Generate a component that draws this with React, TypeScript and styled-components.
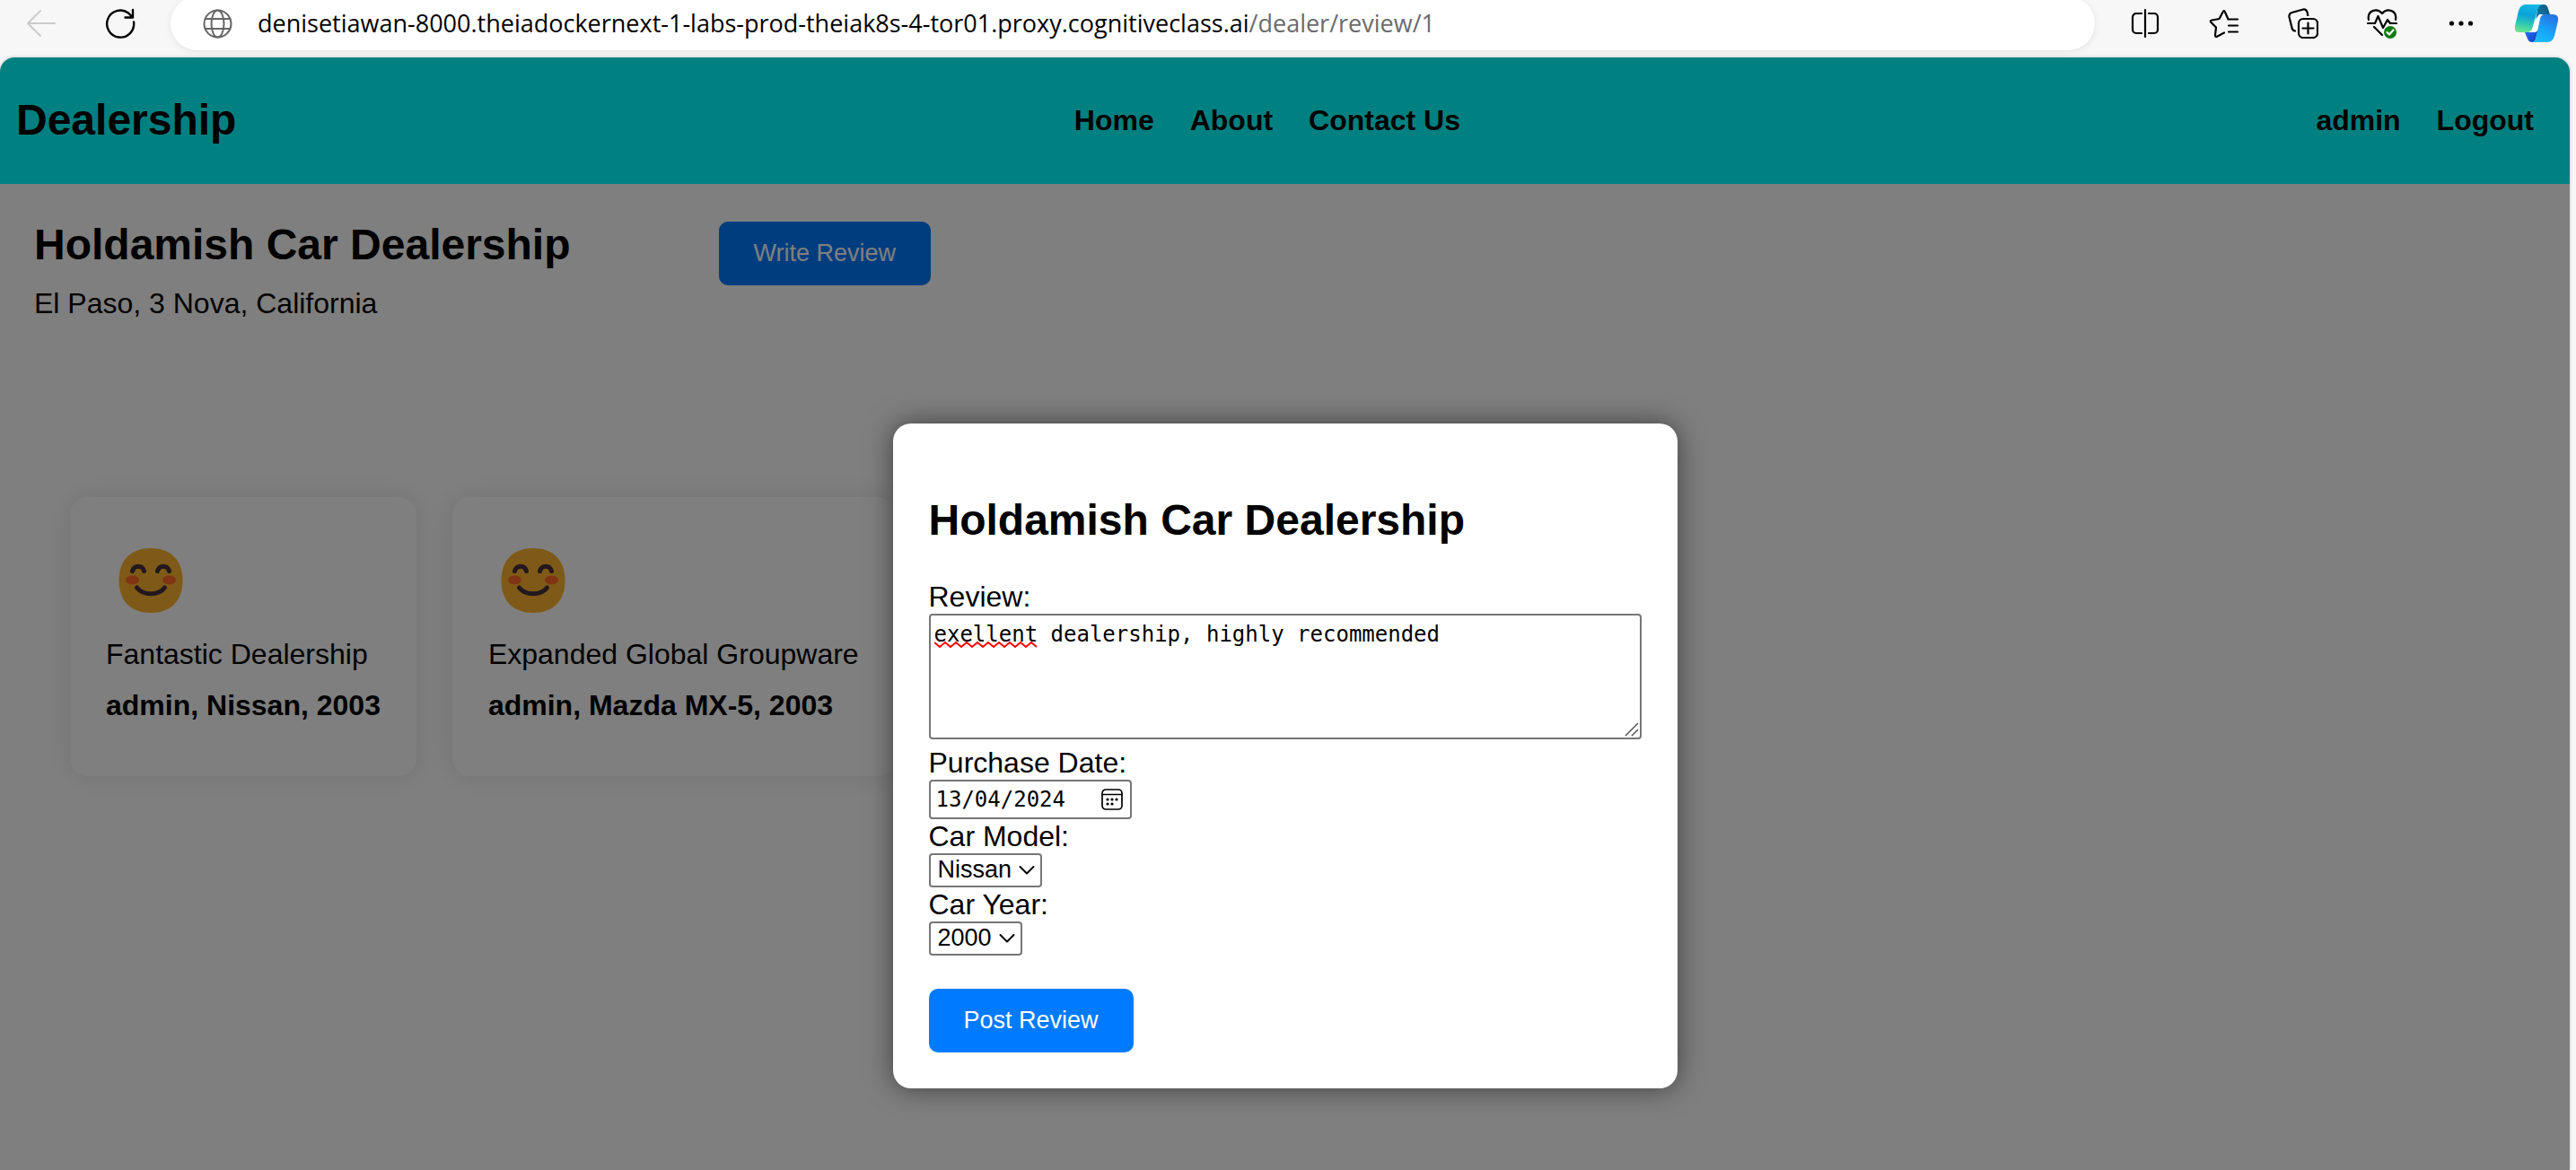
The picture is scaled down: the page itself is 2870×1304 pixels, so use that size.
import React, { useState } from "react";
import styled, { createGlobalStyle } from "styled-components";

const sans = `"Liberation Sans", Arial, sans-serif`;
const mono = `"DejaVu Sans Mono", Consolas, monospace`;

const GlobalStyle = createGlobalStyle`
  *, *::before, *::after { box-sizing: border-box; }
  html, body, #root { height: 100%; }
  body {
    margin: 0;
    background: #f7f7f7;
    color: #000;
    font: 32px/38px ${sans};
    overflow: hidden;
  }
  h1, p { margin: 0; }
  a { color: inherit; text-decoration: none; }
`;

const Browser = styled.div`
  display: flex;
  flex-direction: column;
  height: 100%;
`;

const Toolbar = styled.div`
  flex: none;
  display: flex;
  align-items: flex-start;
  height: 64px;
  padding: 0 4px 0 2px;
`;

const ToolButton = styled.button<{ $faded?: boolean; $narrow?: boolean }>`
  display: flex;
  align-items: center;
  justify-content: center;
  width: ${(p) => (p.$narrow ? 80 : 88)}px;
  height: 52px;
  padding: 0;
  border: 0;
  background: none;
  color: ${(p) => (p.$faded ? "#cccccc" : "#000000")};
`;

const AddressBar = styled.div`
  flex: 1;
  display: flex;
  align-items: center;
  gap: 28px;
  height: 60px;
  margin: -4px 12px 0;
  padding: 0 36px;
  border-radius: 30px;
  background: #fff;
  color: #666;
  box-shadow: 0 2px 8px rgba(0, 0, 0, 0.08);
`;

const Address = styled.a`
  color: #6b6b6b;
  font: 27px/36px "Open Sans", "Noto Sans", sans-serif;
  white-space: nowrap;
`;

const Host = styled.span`
  color: #000;
`;

const Page = styled.div`
  flex: 1;
  display: flex;
  flex-direction: column;
  margin-right: 7px;
  border-radius: 16px 16px 0 0;
  background: #fff;
  overflow: hidden;
  box-shadow: 0 0 4px rgba(0, 0, 0, 0.2);
`;

const Header = styled.header`
  flex: none;
  display: flex;
  align-items: center;
  justify-content: space-between;
  height: 141px;
  padding: 0 20px 2px 18px;
  background: #008080;
  font-weight: bold;
`;

const Brand = styled.a`
  font-size: 48px;
  line-height: 52px;
`;

const Nav = styled.nav`
  display: flex;
  gap: 40px;
  padding: 0 20px;
`;

const Main = styled.main`
  position: relative;
  flex: 1;
  padding: 42px 38px;
`;

const Intro = styled.section`
  display: flex;
  align-items: flex-start;
  gap: 165px;
`;

const IntroText = styled.div`
  display: flex;
  flex-direction: column;
  gap: 20px;
`;

const Title = styled.h1`
  font-size: 48px;
  line-height: 52px;
`;

const PrimaryButton = styled.button`
  height: 71px;
  padding: 0 39px 2px;
  border: 0;
  border-radius: 10px;
  background: #007bff;
  color: #fff;
  font: 27px/32px ${sans};
  white-space: nowrap;
`;

const Reviews = styled.section`
  display: flex;
  gap: 40px;
  padding: 197px 40px 0;
`;

const Card = styled.article`
  display: flex;
  flex-direction: column;
  padding: 40px 40px 60px;
  border-radius: 20px;
  background: #fff;
  box-shadow: 0 0 30px rgba(0, 0, 0, 0.1);
  white-space: nowrap;

  svg { display: block; margin-bottom: 10px; }
`;

const Author = styled.p`
  margin-top: 19px;
  font-weight: bold;
`;

const Overlay = styled.div`
  position: absolute;
  inset: 0;
  display: flex;
  align-items: flex-start;
  justify-content: center;
  padding-top: 267px;
  background: rgba(0, 0, 0, 0.5);
`;

const Dialog = styled.form`
  display: flex;
  flex-direction: column;
  align-items: flex-start;
  width: 874px;
  padding: 82px 40px 40px;
  border-radius: 20px;
  background: #fff;
  box-shadow: 0 0 30px rgba(0, 0, 0, 0.5);

  ${Title} { margin-bottom: 40px; }
  ${PrimaryButton} { margin-top: 37px; }
`;

const fieldBorder = `
  margin: 0;
  border: 2px solid #767676;
  border-radius: 4px;
  background: #fff;
  color: #000;
`;

const TextBox = styled.div`
  position: relative;
  align-self: stretch;
  margin-bottom: 7px;
`;

const TextArea = styled.textarea`
  ${fieldBorder}
  display: block;
  width: 100%;
  height: 140px;
  padding: 4px;
  font: 24px/34px ${mono};
  resize: none;
`;

const Squiggle = styled.svg`
  position: absolute;
  left: 6px;
  top: 31px;
`;

const Grip = styled.svg`
  position: absolute;
  right: 3px;
  bottom: 3px;
`;

const DateBox = styled.div`
  ${fieldBorder}
  display: flex;
  align-items: center;
  gap: 30px;
  height: 44px;
  padding: 0 8px 0 6px;
`;

const DateInput = styled.input`
  width: 154px;
  padding: 0;
  border: 0;
  background: none;
  font: 24px/32px ${mono};
`;

const IconButton = styled.button`
  display: flex;
  padding: 0;
  border: 0;
  background: none;
  color: #000;
`;

const SelectBox = styled.div`
  position: relative;
  display: flex;
  align-items: center;

  svg { position: absolute; right: 8px; pointer-events: none; }
`;

const Select = styled.select`
  ${fieldBorder}
  appearance: none;
  height: 38px;
  padding: 0 31px 2px 8px;
  font: 27px/32px ${sans};
`;

const line = { fill: "none", stroke: "currentColor", strokeWidth: 2, strokeLinecap: "round", strokeLinejoin: "round" } as const;

const BackIcon = () => (
  <svg width="32" height="30" viewBox="0 0 32 30" {...line}>
    <path d="M31 15H1M15 1 1 15l14 14" />
  </svg>
);

const ReloadIcon = () => (
  <svg width="34" height="34" viewBox="0 0 34 34" {...line} strokeWidth={2.4}>
    <path d="M32 15.500A15 15 0 1 1 26 5.500L30.500 10M31 2v8.500h-8.500" />
  </svg>
);

const GlobeIcon = () => (
  <svg width="33" height="33" viewBox="0 0 33 33" {...line}>
    <circle cx="16.500" cy="16.500" r="15" />
    <ellipse cx="16.500" cy="16.500" rx="7" ry="15" />
    <path d="M3 11h27M3 22h27" />
  </svg>
);

const SplitIcon = () => (
  <svg width="32" height="34" viewBox="0 0 32 34" {...line} strokeWidth={2.2}>
    <path d="M12 6H6a4 4 0 0 0-4 4v14a4 4 0 0 0 4 4h6M20 6h6a4 4 0 0 1 4 4v14a4 4 0 0 1-4 4h-6M16 2v30" />
  </svg>
);

const FavoritesIcon = () => (
  <svg width="34" height="34" viewBox="0 0 34 34" {...line} strokeWidth={2.2}>
    <path d="M21.500 12.500 18 4.500q-1-3-2.500 0L11.500 12 3.500 13.500Q.500 14 2.500 16L8 21.500 7 30q0 3 2.500 1.500L17 27.500M21.500 12.500H32M22 19.500h10M22 26.500h10" />
  </svg>
);

const CollectionsIcon = () => (
  <svg width="34" height="34" viewBox="0 0 34 34" {...line} strokeWidth={2.2}>
    <rect x="12" y="12" width="21" height="21" rx="5" />
    <path d="M22.500 16.500v12M16.500 22.500h12M8 25.500q-3-.500-3.500-3.500L1.500 10q-.500-4 3-5L17 1.500q3.500-.500 4.500 3l.800 3.500" />
  </svg>
);

const HealthIcon = () => (
  <svg width="34" height="34" viewBox="0 0 34 34" {...line} strokeWidth={2.2}>
    <path d="M2 13C0 3 11-1 17 6c6-7 17-3 15 7M1 17h8l3.500-8 5.500 13 5-9 3 4h7M8 21l9 9" />
    <circle cx="26" cy="27" r="7" fill="#107c10" stroke="none" />
    <path d="m22.500 27 2.500 2.500 4.500-5" stroke="#fff" />
  </svg>
);

const MoreIcon = () => (
  <svg width="28" height="8" viewBox="0 0 28 8" fill="currentColor">
    <circle cx="3.500" cy="4" r="2.600" />
    <circle cx="14" cy="4" r="2.600" />
    <circle cx="24.500" cy="4" r="2.600" />
  </svg>
);

const CopilotIcon = () => (
  <svg width="48" height="42" viewBox="0 0 48 42">
    <defs>
      <linearGradient id="petalLeft" x1="0.600" y1="0" x2="0.400" y2="1">
        <stop offset="0" stopColor="#14b8e4" />
        <stop offset="0.400" stopColor="#0ba2da" />
        <stop offset="0.700" stopColor="#2cc5b4" />
        <stop offset="1" stopColor="#66e490" />
      </linearGradient>
      <linearGradient id="petalRight" x1="0.800" y1="0" x2="0.300" y2="1">
        <stop offset="0" stopColor="#2b70dc" />
        <stop offset="0.600" stopColor="#16a6fb" />
        <stop offset="1" stopColor="#1fbdf6" />
      </linearGradient>
      <linearGradient id="foldTop" x1="0" y1="1" x2="1" y2="0">
        <stop offset="0" stopColor="#1088b8" />
        <stop offset="1" stopColor="#0b5078" />
      </linearGradient>
      <linearGradient id="foldBottom" x1="0" y1="0" x2="1" y2="1">
        <stop offset="0" stopColor="#2278f4" />
        <stop offset="1" stopColor="#1438c8" />
      </linearGradient>
    </defs>
    <path d="M26 0h6q3.500 0 4.500 3.500L39 11h-8q-4 0-5 3l-3 3z" fill="url(#foldTop)" />
    <path d="M11 31h10l5-3-4 14h-3q-4 0-5.500-5z" fill="url(#foldBottom)" />
    <path d="M31 11h-4l-5 7-5 13h4q4 0 5-4z" fill="#fff" />
    <path d="M12 0h20q-5 0-7 6l-5.500 20q-1.500 5-5.500 5H5q-6 0-5-7L4 7q2-7 8-7z" fill="url(#petalLeft)" />
    <path d="M33 11h9q7 0 6 7l-4 17q-2 7-8 7H18q4 0 5.500-5L28 16q1-5 5-5z" fill="url(#petalRight)" />
  </svg>
);

const SmileIcon = () => (
  <svg width="100" height="106" viewBox="0 0 100 106" fill="none" stroke="#45303d" strokeWidth="5" strokeLinecap="round">
    <path
      d="M50 17c22 0 35.500 13 35.500 36S72 89 50 89 14.500 76 14.500 53 28 17 50 17z"
      fill="#ffb32e"
      stroke="none"
    />
    <path d="M29.500 42.500c2-7 11-7 13 0M57.500 42.500c2-7 11-7 13 0M34.500 61c7 9 24 9 31 0" />
    <ellipse cx="29.500" cy="52.500" rx="7.500" ry="5" fill="#ff6a26" stroke="none" />
    <ellipse cx="70.500" cy="52.500" rx="7.500" ry="5" fill="#ff6a26" stroke="none" />
  </svg>
);

const CalendarIcon = () => (
  <svg width="24" height="24" viewBox="0 0 24 24" {...line} strokeWidth={1.7}>
    <rect x="1" y="1" width="22" height="22" rx="4" />
    <path d="M1 6.500h22" />
    <g fill="currentColor" stroke="none">
      <circle cx="7" cy="12" r="1.600" />
      <circle cx="12" cy="12" r="1.600" />
      <circle cx="17" cy="12" r="1.600" />
      <circle cx="7" cy="17" r="1.600" />
      <circle cx="12" cy="17" r="1.600" />
    </g>
  </svg>
);

const ChevronIcon = () => (
  <svg width="18" height="12" viewBox="0 0 18 12" {...line}>
    <path d="m1.500 2 7.500 7.500L16.500 2" />
  </svg>
);

const reviews = [
  { text: "Fantastic Dealership", author: "admin, Nissan, 2003" },
  { text: "Expanded Global Groupware", author: "admin, Mazda MX-5, 2003" },
];

const wave = "M0 1" + Array.from({ length: 19 }, (_, i) => `L${(i + 1) * 6} ${i % 2 ? 1 : 6}`).join("");

function Picker({ id, label, options }: { id: string; label: string; options: string[] }) {
  return (
    <>
      <label htmlFor={id}>{label}</label>
      <SelectBox>
        <Select id={id}>
          {options.map((o) => (
            <option key={o}>{o}</option>
          ))}
        </Select>
        <ChevronIcon />
      </SelectBox>
    </>
  );
}

export default function App() {
  const [review, setReview] = useState("exellent dealership, highly recommended");
  const [date, setDate] = useState("13/04/2024");

  return (
    <Browser>
      <GlobalStyle />
      <Toolbar>
        <ToolButton $faded aria-label="Back"><BackIcon /></ToolButton>
        <ToolButton aria-label="Refresh"><ReloadIcon /></ToolButton>
        <AddressBar>
          <GlobeIcon />
          <Address href="#">
            <Host>denisetiawan-8000.theiadockernext-1-labs-prod-theiak8s-4-tor01.proxy.cognitiveclass.ai</Host>
            /dealer/review/1
          </Address>
        </AddressBar>
        <ToolButton aria-label="Split screen"><SplitIcon /></ToolButton>
        <ToolButton aria-label="Favorites"><FavoritesIcon /></ToolButton>
        <ToolButton aria-label="Collections"><CollectionsIcon /></ToolButton>
        <ToolButton aria-label="Browser essentials"><HealthIcon /></ToolButton>
        <ToolButton aria-label="Settings and more"><MoreIcon /></ToolButton>
        <ToolButton $narrow aria-label="Copilot"><CopilotIcon /></ToolButton>
      </Toolbar>

      <Page>
        <Header>
          <Brand href="#">Dealership</Brand>
          <Nav>
            <a href="#">Home</a>
            <a href="#">About</a>
            <a href="#">Contact Us</a>
          </Nav>
          <Nav>
            <a href="#">admin</a>
            <a href="#">Logout</a>
          </Nav>
        </Header>

        <Main>
          <Intro>
            <IntroText>
              <Title>Holdamish Car Dealership</Title>
              <p>El Paso, 3 Nova, California</p>
            </IntroText>
            <PrimaryButton>Write Review</PrimaryButton>
          </Intro>
          <Reviews>
            {reviews.map((r) => (
              <Card key={r.text}>
                <SmileIcon />
                <p>{r.text}</p>
                <Author>{r.author}</Author>
              </Card>
            ))}
          </Reviews>

          <Overlay>
            <Dialog onSubmit={(e) => e.preventDefault()}>
              <Title>Holdamish Car Dealership</Title>
              <label htmlFor="review">Review:</label>
              <TextBox>
                <TextArea id="review" spellCheck={false} value={review} onChange={(e) => setReview(e.target.value)} />
                <Squiggle width="116" height="8" viewBox="0 0 116 8" fill="none" stroke="#ff0000" strokeWidth="2">
                  <path d={wave} />
                </Squiggle>
                <Grip width="16" height="16" viewBox="0 0 16 16" fill="none" stroke="#555" strokeWidth="1.500">
                  <path d="M1 15 15 1M8 15l7-7" />
                </Grip>
              </TextBox>
              <label htmlFor="date">Purchase Date:</label>
              <DateBox>
                <DateInput id="date" value={date} onChange={(e) => setDate(e.target.value)} />
                <IconButton type="button" aria-label="Show date picker"><CalendarIcon /></IconButton>
              </DateBox>
              <Picker id="model" label="Car Model:" options={["Nissan"]} />
              <Picker id="year" label="Car Year:" options={["2000"]} />
              <PrimaryButton type="submit">Post Review</PrimaryButton>
            </Dialog>
          </Overlay>
        </Main>
      </Page>
    </Browser>
  );
}
